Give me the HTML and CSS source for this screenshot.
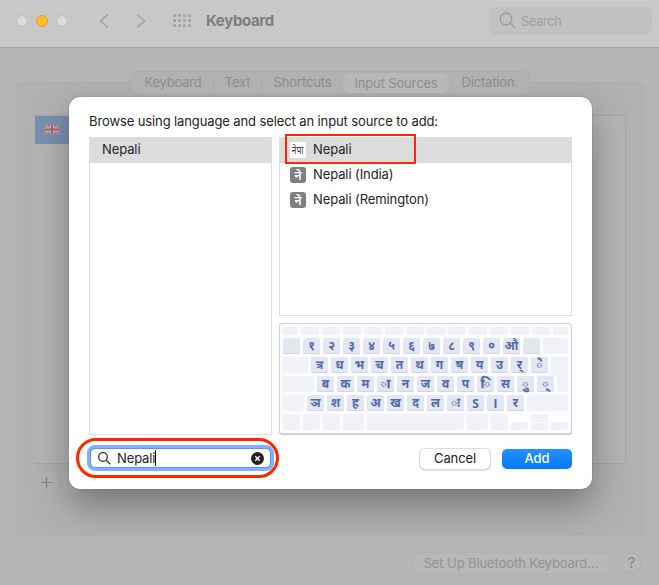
FILE: index.html
```
<!DOCTYPE html>
<html lang="en">
<head>
<meta charset="utf-8">
<title>Keyboard</title>
<link rel="stylesheet" href="styles.css">
</head>
<body>
<div class="window">
  <header class="toolbar">
    <div class="lights"><i></i><i class="amber"></i><i></i></div>
    <svg class="nav" width="48" height="16" viewBox="0 0 48 16"><path d="M9 1.500L1.500 8L9 14.500M38 1.500L45.500 8L38 14.500"/></svg>
    <svg class="grid" width="18" height="13" viewBox="0 0 18 13"><path d="M0 1.500H18M0 6.500H18M0 11.500H18"/></svg>
    <h1>Keyboard</h1>
    <div class="search"><svg width="17" height="17" viewBox="0 0 17 17"><circle cx="7" cy="7" r="5.800"/><path d="M11.200 11.200L16 16"/></svg><span>Search</span></div>
  </header>
  <nav class="tabs"><span class="t1">Keyboard</span><span class="t2">Text</span><span class="t3">Shortcuts</span><span class="t4">Input Sources</span><span class="t5">Dictation</span></nav>
  <main class="panel">
    <div class="sources">
      <div class="source"><svg width="16" height="11" viewBox="0 0 16 11"><path fill="#717b96" d="M0 0H16V11H0z"/><path stroke="#b9b9bd" stroke-width="2.400" d="M0 0L16 11M16 0L0 11"/><path stroke="#a86f78" d="M0 0L16 11M16 0L0 11"/><path stroke="#bcbcc0" stroke-width="4" d="M8 0V11M0 5.500H16"/><path stroke="#a9616a" stroke-width="2" d="M8 0V11M0 5.500H16"/></svg></div>
    </div>
    <div class="addremove"><svg width="11" height="11" viewBox="0 0 11 11"><path d="M5.500 0V11M0 5.500H11"/></svg><i></i></div>
  </main>
  <footer class="footer"><span class="bluetooth">Set Up Bluetooth Keyboard…</span><span class="help">?</span></footer>
</div>

<section class="dialog">
  <p class="prompt">Browse using language and select an input source to add:</p>
  <div class="columns">
    <div class="list languages"><div class="row selected">Nepali</div></div>
    <div class="right">
      <div class="list inputs">
        <div class="row selected"><span class="badge white"><span>नेपा</span></span><span>Nepali</span></div>
        <div class="row"><span class="badge">ने</span><span>Nepali (India)</span></div>
        <div class="row"><span class="badge">ने</span><span>Nepali (Remington)</span></div>
        <div class="highlight"></div>
      </div>
      <div class="keyboard">
        <div class="keys fn"><i class="w15"></i><i></i><i></i><i></i><i></i><i></i><i></i><i></i><i></i><i></i><i></i><i></i><i></i><i class="w15"></i></div>
        <div class="keys"><b></b><b>१</b><b>२</b><b>३</b><b>४</b><b>५</b><b>६</b><b>७</b><b>८</b><b>९</b><b>०</b><b>औ</b><b></b><i class="fill"></i></div>
        <div class="keys"><i class="w25"></i><b>त्र</b><b>ध</b><b>भ</b><b>च</b><b>त</b><b>थ</b><b>ग</b><b>ष</b><b>य</b><b>उ</b><b>र्</b><b class="mark">◌े</b><i class="fill enter"></i></div>
        <div class="keys"><i class="w31"></i><b>ब</b><b>क</b><b>म</b><b class="mark">◌ा</b><b>न</b><b>ज</b><b>व</b><b>प</b><b class="mark">◌ि</b><b>स</b><b class="mark">◌ु</b><b class="mark">◌्</b><i class="fill"></i></div>
        <div class="keys"><i class="w21"></i><b>ञ</b><b>श</b><b>ह</b><b>अ</b><b>ख</b><b>द</b><b>ल</b><b class="mark">◌ः</b><b class="latin">S</b><b class="latin">I</b><b>र</b><i class="fill"></i></div>
        <div class="keys"><i></i><i></i><i></i><i class="w21"></i><i class="fill"></i><i class="w21"></i><i></i><i class="half"></i><span class="updown"><i></i><i></i></span><i class="half"></i></div>
      </div>
    </div>
  </div>
  <div class="actions">
    <div class="field">
      <svg width="13" height="13" viewBox="0 0 13 13"><circle cx="5" cy="5" r="4.300"/><path d="M8.200 8.200L12.300 12.300"/></svg>
      <span>Nepali</span><i class="caret"></i>
      <svg class="clear" width="13" height="13" viewBox="0 0 13 13"><circle cx="6.500" cy="6.500" r="6.500"/><path d="M4.300 4.300L8.700 8.700M8.700 4.300L4.300 8.700"/></svg>
      <div class="oval"></div>
    </div>
    <span class="button cancel">Cancel</span><span class="button add">Add</span>
  </div>
</section>
</body>
</html>
```

FILE: styles.css
```
* { box-sizing: border-box; }
body { margin: 0; width: 659px; height: 585px; overflow: hidden; position: relative; background: #b5b5b5; color: #242424; font: 13px/16px Inter, "Noto Sans Devanagari", sans-serif; }
i { display: block; font-style: normal; }
svg { display: block; fill: none; flex: none; }
.window { height: 585px; display: flex; flex-direction: column; }
.toolbar { height: 48px; flex: none; display: flex; align-items: center; padding: 0 7px 6px 16px; background: #c8c8c8; border-bottom: 1px solid #a4a4a4; }
.lights { display: flex; gap: 8px; }
.lights i { width: 12px; height: 12px; border-radius: 50%; background: #dadada; border: 1px solid #bcbcbc; }
.lights .amber { background: #febc2e; border-color: #dfa023; }
.nav { margin-left: 31px; stroke: #a1a1a1; stroke-width: 1.600; }
.grid { margin-left: 26px; stroke: #a9a9a9; stroke-width: 3; stroke-dasharray: 3 2; }
h1 { margin: 0 auto 0 15px; font-size: 15px; font-weight: 700; letter-spacing: -.35px; color: #7e7e7e; }
.search { width: 162px; height: 28px; border-radius: 6px; background: #c1c1c1; display: flex; align-items: center; gap: 5px; padding-left: 9px; color: #a0a0a0; }
.search svg { stroke: #999; stroke-width: 1.200; }
.search span { letter-spacing: -.5px; padding-top: 1px; }
.tabs { height: 21px; width: 396px; margin: 24px 0 0 133px; flex: none; display: flex; align-items: center; border-radius: 6px; background: #b1b1b1; box-shadow: 0 0 0 1px #adadad; color: #8d8d8d; z-index: 1; }
.tabs span { text-align: center; border-right: 1px solid #a9a9a9; line-height: 13px; letter-spacing: -.15px; }
.tabs .t1 { width: 81px; letter-spacing: -.2px; }
.tabs .t2 { width: 48px; }
.tabs .t3 { width: 81px; border: 0; }
.tabs .t4 { width: 106px; line-height: 20px; border: 0; border-radius: 6px; background: #b8b8b8; box-shadow: 0 0 1px #999; }
.tabs .t5 { width: 78px; border: 0; }
.panel { margin: -11px 15px 0 16px; height: 453px; flex: none; border: 1px solid #adadad; border-radius: 5px; background: #b1b1b1; padding: 32px 17px 0 18px; }
.sources { height: 349px; border: 1px solid #a7a7a7; border-left: 0; background: #b5b5b5; }
.source { width: 40px; height: 28px; background: #7891b1; padding: 8px 0 0 9px; }
.addremove { display: flex; align-items: center; width: 50px; height: 20px; margin-top: 8px; border-radius: 5px; background: #b3b3b3; box-shadow: 0 0 1px #999; padding-left: 6px; gap: 8px; }
.addremove svg { stroke: #858585; stroke-width: 1.200; }
.addremove i { width: 1px; height: 12px; background: #a6a6a6; }
.footer { display: flex; justify-content: flex-end; gap: 13px; padding: 18px 18px 0 0; color: #939393; }
.bluetooth { width: 196px; height: 20px; line-height: 20px; text-align: center; letter-spacing: -.1px; border-radius: 5px; background: #b8b8b8; box-shadow: 0 0 1px #999; white-space: nowrap; }
.help { width: 19px; height: 20px; line-height: 20px; font-size: 15px; text-align: center; color: #858585; border-radius: 50%; background: #b8b8b8; box-shadow: 0 0 1px #999; }

.dialog { position: absolute; left: 69px; top: 97px; width: 523px; height: 392px; border-radius: 11px; background: #fff; padding: 16px 20px 0; box-shadow: 0 0 1px #555, 0 16px 36px rgba(0,0,0,.34); }
.prompt { margin: 0 0 8px; white-space: nowrap; letter-spacing: -.11px; }
.columns { display: flex; gap: 7px; height: 297px; }
.list { border: 1px solid #dedede; background: #fff; }
.languages { width: 183px; height: 298px; }
.languages .row { padding-left: 12px; }
.right { width: 293px; }
.inputs { height: 179px; position: relative; }
.row { height: 25px; display: flex; align-items: center; padding-bottom: 3px; letter-spacing: -.1px; }
.inputs .row { padding-left: 10px; gap: 7px; }
.selected { background: #dcdcdc; }
.badge { width: 16px; height: 16px; flex: none; margin-top: 1px; border-radius: 3px; background: #7f7f7f; color: #fff; font-size: 12px; font-weight: 600; line-height: 18px; text-align: center; overflow: hidden; letter-spacing: 0; }
.badge.white { background: #fff; color: #333; font-size: 11px; font-weight: 400; border-radius: 0; line-height: 17px; display: flex; justify-content: center; overflow: visible; }
.badge.white span { transform: scaleX(.76); flex: none; }
.highlight { position: absolute; left: 5px; top: -4px; width: 131px; height: 30px; border: 2px solid #ff2600; }
.keyboard { height: 111px; margin-top: 7px; border: 1px solid #cdd1d8; border-radius: 3px; background: #fbfcff; padding: 3px; display: flex; flex-direction: column; gap: 3px; box-shadow: 0 1px 1px #ccc; }
.keys { display: flex; gap: 3px; height: 16px; }
.keys.fn { height: 8px; }
.keys i { width: 17px; flex: none; background: #f0f2f8; border-radius: 2px; }
.fn i { width: 18px; }
.keys .w15 { width: 15px; }
.keys .w21 { width: 21px; }
.keys .w25 { width: 25px; }
.keys .w31 { width: 31px; }
.keys .fill { flex: 1; width: auto; }
.keys .enter { height: 19px; }
.keys b { width: 17px; flex: none; height: 16px; border-radius: 2px; background: #e3e7f1; border-bottom: 1px solid #cfd5e3; color: #506aa5; font: 700 12px/19px "Noto Sans Devanagari", "Noto Sans", sans-serif; display: flex; justify-content: center; white-space: nowrap; }
.keys .mark { -webkit-text-stroke: .4px #506aa5; }
.keys .latin { font-family: "Open Sans", sans-serif; line-height: 17px; }
.keys .half { height: 8px; margin-top: 8px; }
.updown { display: flex; flex-direction: column; gap: 1px; }
.updown i { height: 8px; }
.updown i + i { height: 7px; }
.actions { display: flex; margin-top: 15px; align-items: flex-start; }
.field { position: relative; width: 179px; height: 18px; margin: 0 0 0 2px; border-radius: 4px; box-shadow: 0 0 0 1px #5c97e8, 0 0 0 4px #80b1fa; display: flex; align-items: center; padding: 0 6px 0 7px; }
.field svg { stroke: #333; stroke-width: 1.300; }
.field span { margin-left: 6px; letter-spacing: -.12px; }
.caret { width: 1px; height: 16px; background: #000; }
.field .clear { margin-left: auto; fill: #242424; stroke: none; }
.field .clear path { stroke: #fff; stroke-width: 1.400; }
.oval { position: absolute; left: -15px; top: -11px; width: 203px; height: 40px; border: 3px solid #ff2600; border-radius: 20px; }
.button { height: 20px; line-height: 19px; border-radius: 5px; text-align: center; }
.cancel { width: 70px; margin-left: 150px; letter-spacing: -.1px; box-shadow: 0 0 0 1px #ddd, 0 1px 2px #999; }
.add { width: 70px; margin-left: 12px; color: #fff; background: linear-gradient(#2491ff, #0479fb); font-weight: 500; }
```
